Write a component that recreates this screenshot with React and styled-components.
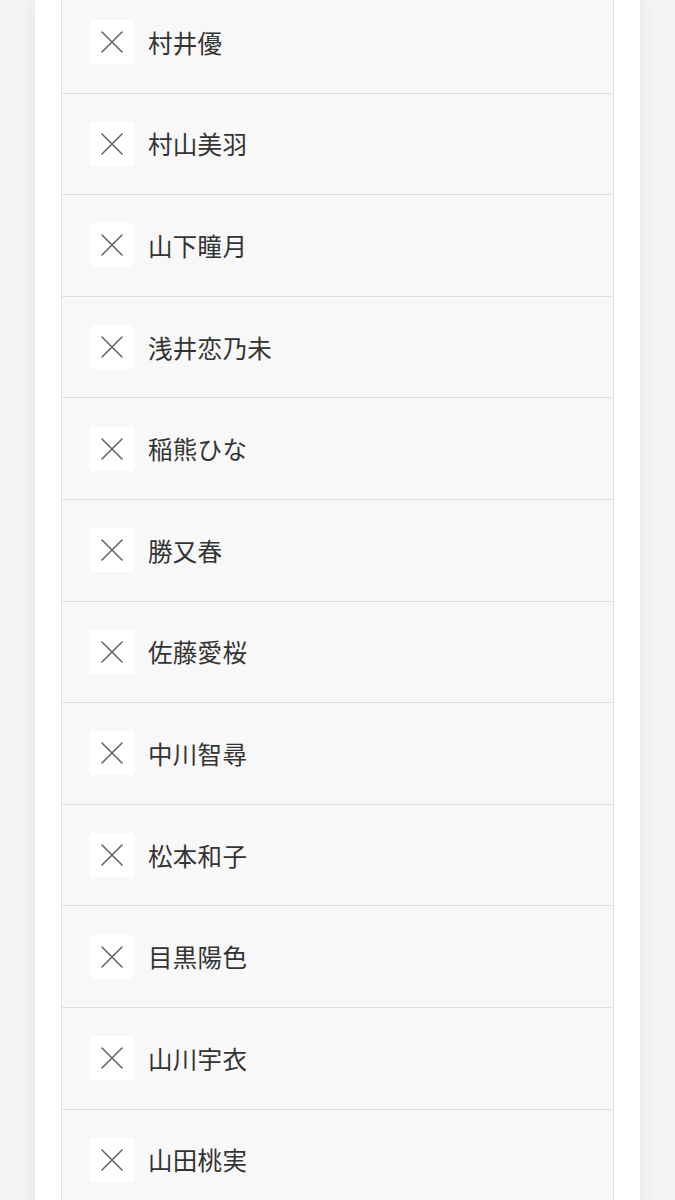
import React from 'react'
import styled, { createGlobalStyle } from 'styled-components'

const GlobalStyle = createGlobalStyle`
html, body {
  margin: 0;
  padding: 0;
  background: #f5f5f5;
  font-family: "Noto Sans CJK JP", "Noto Sans", sans-serif;
}
`

const Page = styled.div`
height: 1200px;
overflow: hidden;
`

const Card = styled.div`
width: 553px;
margin: 0 0 0 35px;
padding: 0 26px;
background: #ffffff;
box-shadow: 0 0 22px rgba(0, 0, 0, 0.07);
min-height: 1300px;
`

const List = styled.ul`
list-style: none;
margin: -8px 0 0;
padding: 0;
border-left: 1px solid #dfdfe6;
border-right: 1px solid #dfdfe6;
`

const Row = styled.li`
display: flex;
align-items: center;
gap: 14px;
height: 100.6px;
padding: 0 28px;
background: #f8f8f8;
border-bottom: 1px solid #dfdfe6;
`

const RemoveButton = styled.button`
width: 44px;
height: 44px;
display: flex;
align-items: center;
justify-content: center;
padding: 0;
border: none;
border-radius: 2px;
background: #ffffff;
cursor: pointer;
`

const Name = styled.span`
font-size: 24.5px;
color: #333333;
letter-spacing: 0.3px;
`

const names = [
  '村井優',
  '村山美羽',
  '山下瞳月',
  '浅井恋乃未',
  '稲熊ひな',
  '勝又春',
  '佐藤愛桜',
  '中川智尋',
  '松本和子',
  '目黒陽色',
  '山川宇衣',
  '山田桃実',
]

const CloseIcon = () => (
  <svg width="24" height="24" viewBox="0 0 24 24" fill="none">
    <path d="M2 2L22 22M22 2L2 22" stroke="#666666" strokeWidth="1.6" strokeLinecap="round" />
  </svg>
)

export default function App() {
  return (
    <Page>
      <GlobalStyle />
      <Card>
        <List>
          {names.map((name) => (
            <Row key={name}>
              <RemoveButton aria-label="remove">
                <CloseIcon />
              </RemoveButton>
              <Name>{name}</Name>
            </Row>
          ))}
        </List>
      </Card>
    </Page>
  )
}
